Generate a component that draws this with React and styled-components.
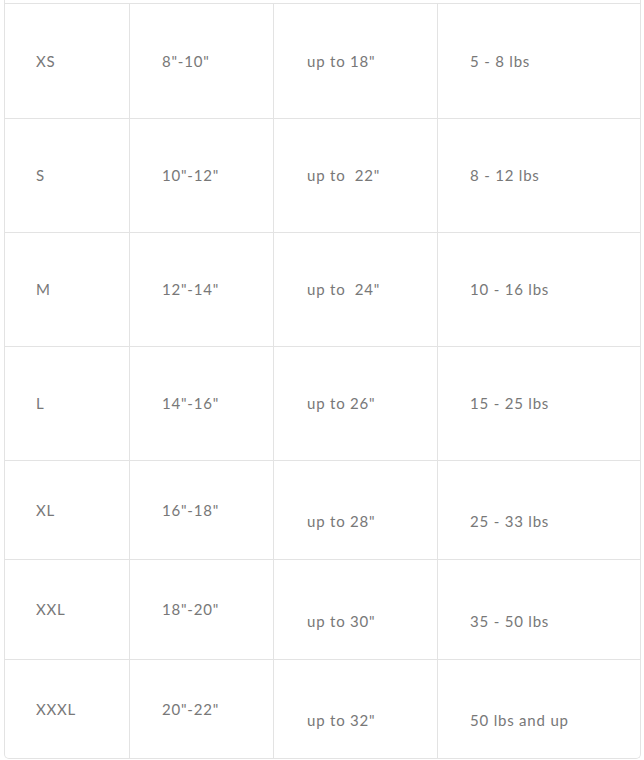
import React from "react";
import styled, {createGlobalStyle} from "styled-components";

const GlobalStyle = createGlobalStyle`
  html, body {
    margin: 0;
    padding: 0;
    background: #fff;
  }
  * {
    box-sizing: border-box;
  }
`;

const rows = [
  {size: "XS", neck: "8\"-10\"", chest: "up to 18\"", weight: "5 - 8 lbs", height: 115},
  {size: "S", neck: "10\"-12\"", chest: "up to\u00a0 22\"", weight: "8 - 12 lbs", height: 114},
  {size: "M", neck: "12\"-14\"", chest: "up to\u00a0 24\"", weight: "10 - 16 lbs", height: 114},
  {size: "L", neck: "14\"-16\"", chest: "up to 26\"", weight: "15 - 25 lbs", height: 114},
  {size: "XL", neck: "16\"-18\"", chest: "up to 28\"", weight: "25 - 33 lbs", height: 99, drop: true},
  {size: "XXL", neck: "18\"-20\"", chest: "up to 30\"", weight: "35 - 50 lbs", height: 100, drop: true},
  {size: "XXXL", neck: "20\"-22\"", chest: "up to 32\"", weight: "50 lbs and up", height: 99, drop: true},
];

const TableWrapper = styled.div`
  width: 637px;
  margin-left: 4px;
  padding-top: 3px;
  border: 1px solid #e3e3e3;
  border-top: none;
  border-radius: 0 0 5px 5px;
  background: #fff;
`;

const Grid = styled.div`
  display: grid;
  grid-template-columns: 125px 144px 164px 1fr;
  grid-template-rows: ${({heights}) => heights.map((h) => `${h}px`).join(" ")};
`;

const Cell = styled.div`
  display: flex;
  align-items: center;
  padding-left: ${({pad}) => pad}px;
  padding-top: ${({drop}) => (drop ? "23px" : "0")};
  padding-bottom: 1px;
  border-top: 1px solid #e3e3e3;
  border-right: ${({last}) => (last ? "none" : "1px solid #e3e3e3")};
  font-family: "Lato", "Noto Sans", sans-serif;
  font-size: 15px;
  letter-spacing: 0.8px;
  color: #787878;
  white-space: pre;
`;

export default function App() {
  return (
    <>
      <GlobalStyle />
      <TableWrapper>
        <Grid heights={rows.map((r) => r.height)}>
          {rows.map((r) => (
            <React.Fragment key={r.size}>
              <Cell pad={31}>{r.size}</Cell>
              <Cell pad={32}>{r.neck}</Cell>
              <Cell pad={33} drop={r.drop}>{r.chest}</Cell>
              <Cell pad={32} drop={r.drop} last>
                {r.weight}
              </Cell>
            </React.Fragment>
          ))}
        </Grid>
      </TableWrapper>
    </>
  );
}
